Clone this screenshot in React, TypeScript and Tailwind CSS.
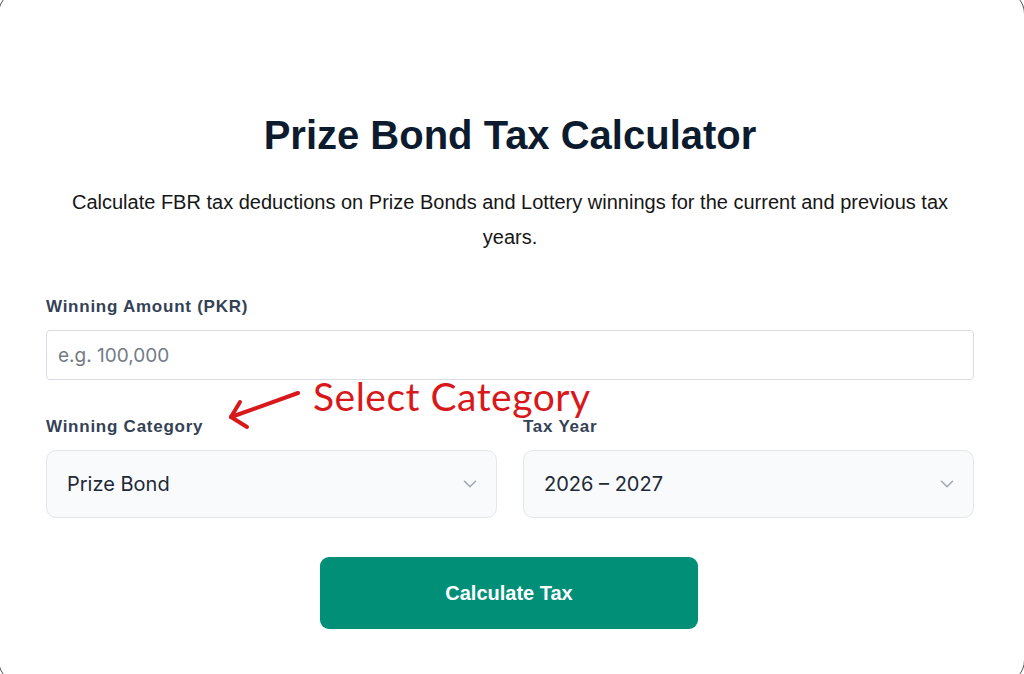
import React from "react";
import { ChevronDown } from "lucide-react";

export default function App() {
  return (
    <div className="relative h-[674px] w-[1024px] overflow-hidden bg-white">
      {/* outer window frame (mostly out of view) */}
      <div className="pointer-events-none absolute -top-[10px] -bottom-[10px] -left-[2px] -right-[1px] rounded-[24px] border-[1.5px] border-[#555]" />

      <div className="relative pl-[46px] pr-[50px] pt-[111px]">
        <h1 className="text-center font-['Liberation_Sans',Arial,sans-serif] text-[40px] font-bold leading-[48px] text-[#0d1b2e]">
          Prize Bond Tax Calculator
        </h1>
        <p className="mt-[26px] text-center font-['Liberation_Sans',Arial,sans-serif] text-[20px] leading-[35px] text-[#161616]">
          Calculate FBR tax deductions on Prize Bonds and Lottery winnings for the current and previous tax years.
        </p>

        <label className="mt-[40px] block font-['Liberation_Sans',Arial,sans-serif] text-[17px] font-bold leading-[24px] tracking-[0.75px] text-[#344256]">
          Winning Amount (PKR)
        </label>
        <input
          type="text"
          placeholder="e.g. 100,000"
          className="mt-[11px] block h-[50px] w-full rounded-[4px] border border-[#d9dde3] bg-white px-[11px] font-['Inter',sans-serif] text-[19px] text-[#1f2937] placeholder:text-[#737b87] outline-none"
        />

        <div className="mt-[35px] grid grid-cols-2 gap-[26px]">
          <div>
            <label className="block font-['Liberation_Sans',Arial,sans-serif] text-[17px] font-bold leading-[24px] tracking-[0.75px] text-[#344256]">
              Winning Category
            </label>
            <div className="mt-[11px] flex h-[68px] items-center justify-between rounded-[10px] border border-[#e3e7ec] bg-[#f8fafc] pl-[20px] pr-[15px]">
              <span className="font-['Inter',sans-serif] text-[20px] text-[#1f2937]">Prize Bond</span>
              <ChevronDown className="h-[22px] w-[22px] text-[#a3a9b3]" strokeWidth={1.75} />
            </div>
          </div>
          <div>
            <label className="block font-['Liberation_Sans',Arial,sans-serif] text-[17px] font-bold leading-[24px] tracking-[0.75px] text-[#344256]">
              Tax Year
            </label>
            <div className="mt-[11px] flex h-[68px] items-center justify-between rounded-[10px] border border-[#e3e7ec] bg-[#f8fafc] pl-[20px] pr-[15px]">
              <span className="font-['Inter',sans-serif] text-[20px] text-[#1f2937]">2026 – 2027</span>
              <ChevronDown className="h-[22px] w-[22px] text-[#a3a9b3]" strokeWidth={1.75} />
            </div>
          </div>
        </div>

        <div className="mt-[39px] flex justify-center pr-[2px]">
          <button className="h-[72px] w-[378px] rounded-[9px] bg-[#028f77] font-['Liberation_Sans',Arial,sans-serif] text-[20px] font-bold text-white">
            Calculate Tax
          </button>
        </div>
      </div>

      {/* annotation overlay */}
      <svg className="pointer-events-none absolute left-0 top-0" width="1024" height="674">
        <g stroke="#d8191c" strokeWidth="4" strokeLinecap="round" strokeLinejoin="round" fill="none">
          <path d="M298 393 L231 417" />
          <path d="M231 417 L247 427" />
          <path d="M231 417 L240 402" />
        </g>
      </svg>
      <div className="pointer-events-none absolute left-[313px] top-[372px] font-['Lato',sans-serif] text-[39px] leading-[48px] tracking-[0.5px] text-[#d8191c]">
        Select Category
      </div>
    </div>
  );
}
